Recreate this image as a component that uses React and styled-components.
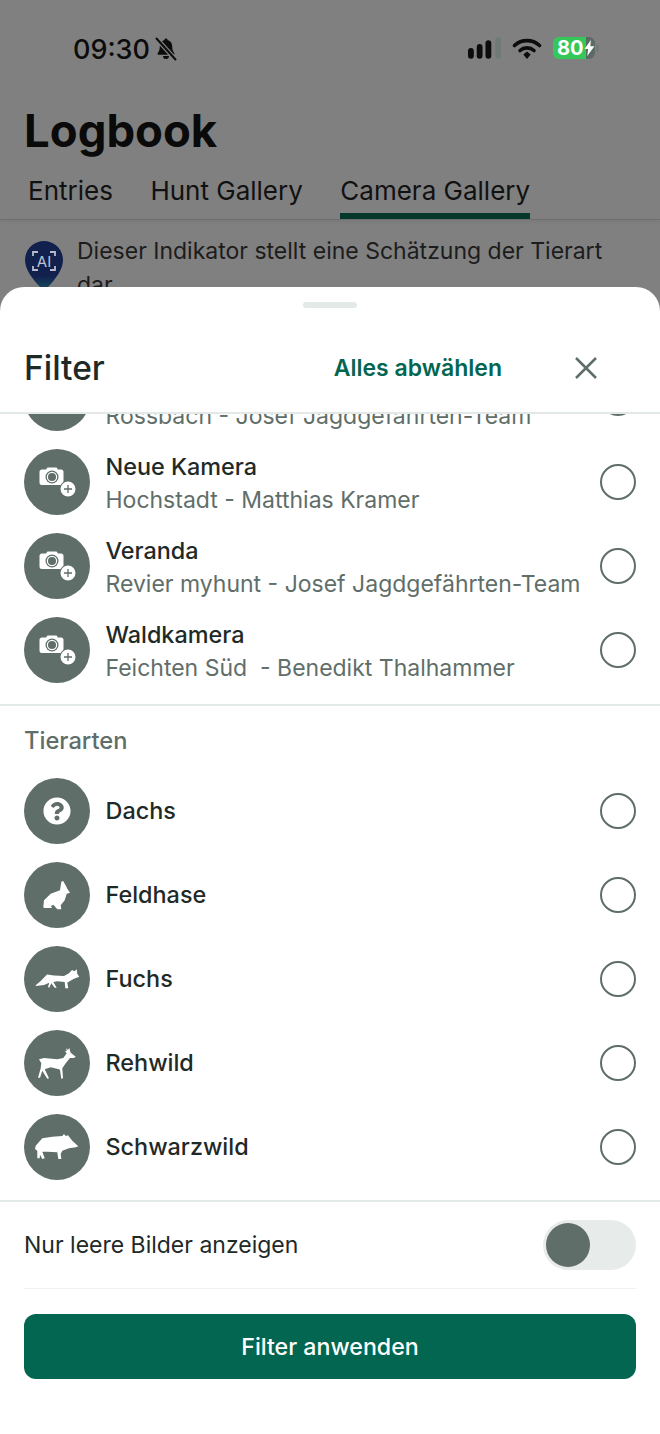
import React from 'react';
import styled, { createGlobalStyle } from 'styled-components';
import { FaQuestionCircle } from 'react-icons/fa';

const GlobalStyle = createGlobalStyle`
  html, body {
    margin: 0;
    padding: 0;
    background: #808080;
  }
  * {
    box-sizing: border-box;
  }
`;

const Page = styled.div`
  width: 660px;
  height: 1434px;
  overflow: hidden;
  display: flex;
  flex-direction: column;
  font-family: Inter, Roboto, "Liberation Sans", sans-serif;
  background: #808080;
`;

const Backdrop = styled.div`
  height: 287px;
  overflow: hidden;
  flex-shrink: 0;
`;

const StatusBar = styled.div`
  height: 98px;
  padding: 32px 61px 0 73px;
  display: flex;
  justify-content: space-between;
  align-items: flex-start;
  color: #0c0c0c;
`;

const StatusLeft = styled.div`
  display: flex;
  align-items: center;
  gap: 5px;
  height: 34px;
  font-size: 27px;
  font-weight: 500;
`;

const StatusRight = styled.div`
  display: flex;
  align-items: center;
  gap: 11px;
  height: 32px;
`;

const Battery = styled.div`
  width: 42px;
  height: 22px;
  border-radius: 6px;
  overflow: hidden;
  display: flex;
  align-items: center;
  padding-left: 4px;
  font-size: 20px;
  font-weight: 700;
  color: #fff;
  background: linear-gradient(to right, #34c759 0, #34c759 33px, #5c6a66 33px);
`;

const BatteryWrap = styled.div`
  display: flex;
  align-items: center;
  gap: 1px;
`;

const BatteryNub = styled.div`
  width: 3px;
  height: 8px;
  border-radius: 0 3px 3px 0;
  background: #6f7a76;
`;

const Title = styled.h1`
  margin: 0;
  padding-left: 24px;
  height: 61px;
  line-height: 66px;
  font-size: 45.5px;
  font-weight: 700;
  color: #0a0a0a;
`;

const Tabs = styled.div`
  height: 61px;
  padding-left: 28px;
  display: flex;
  gap: 37.5px;
  border-bottom: 1px solid #6f6f6f;
  box-shadow: 0 2px 4px rgba(0, 0, 0, 0.06);
`;

const Tab = styled.div`
  height: 60px;
  line-height: 64px;
  font-size: 26px;
  color: #111;
  border-bottom: ${(p) => (p.$active ? '6px solid #03382a' : 'none')};
`;

const Notice = styled.div`
  padding: 14px 24px 0 25px;
  display: flex;
  gap: 14px;
  font-size: 23px;
  line-height: 34px;
  color: #1c1c1c;
`;

const PinIcon = styled.svg`
  flex-shrink: 0;
  margin-top: 7px;
`;

const Sheet = styled.div`
  flex: 1;
  background: #fff;
  border-radius: 24px 24px 0 0;
  display: flex;
  flex-direction: column;
`;

const Handle = styled.div`
  width: 54px;
  height: 6px;
  margin: 15px auto 0;
  border-radius: 3px;
  background: #e3e9e7;
`;

const SheetHeader = styled.div`
  height: 106px;
  padding: 16px 24px 0;
  display: flex;
  align-items: center;
  border-bottom: 2px solid #e3e9e7;
`;

const SheetTitle = styled.div`
  flex: 1;
  font-size: 33.5px;
  font-weight: 500;
  color: #1f2a27;
`;

const ClearButton = styled.div`
  font-size: 23px;
  font-weight: 600;
  color: #036650;
`;

const CloseIcon = styled.svg`
  width: 24px;
  height: 24px;
  margin: 0 38px 0 72px;
`;

const ListClip = styled.div`
  height: 292px;
  overflow: hidden;
  border-bottom: 2px solid #e3e9e7;
  flex-shrink: 0;
`;

const ScrolledList = styled.div`
  margin-top: -58px;
`;

const Row = styled.div`
  height: 84px;
  padding: 0 24px;
  display: flex;
  align-items: center;
`;

const Avatar = styled.div`
  width: 66px;
  height: 66px;
  border-radius: 50%;
  background: #5f6e69;
  color: #fff;
  display: flex;
  align-items: center;
  justify-content: center;
  flex-shrink: 0;
`;

const RowText = styled.div`
  flex: 1;
  min-width: 0;
  align-self: flex-start;
  margin-left: 15.5px;
  padding-top: ${(p) => (p.$single ? '25px' : '10px')};
`;

const RowTitle = styled.div`
  font-size: 23.4px;
  font-weight: 500;
  line-height: 33px;
  color: #1f2a27;
`;

const RowSub = styled.div`
  margin-top: 1px;
  font-size: 23px;
  line-height: 33px;
  color: #5f6e69;
  white-space: pre;
`;

const Radio = styled.div`
  width: 36px;
  height: 36px;
  border-radius: 50%;
  border: 2.5px solid #5f6e69;
  flex-shrink: 0;
`;

const SectionTitle = styled.div`
  height: 63px;
  padding: 16px 24px 0;
  line-height: 38px;
  font-size: 23.7px;
  font-weight: 500;
  color: #5f6e69;
`;

const AnimalList = styled.div`
  padding-bottom: 11px;
  border-bottom: 2px solid #e3e9e7;
`;

const ToggleRow = styled.div`
  height: 87px;
  margin: 0 24px;
  display: flex;
  align-items: center;
  justify-content: space-between;
  font-size: 23px;
  color: #1f2a27;
  border-bottom: 1px solid #eef1f0;
`;

const Toggle = styled.div`
  width: 93px;
  height: 50px;
  padding: 3px;
  border-radius: 25px;
  background: #e7ecea;
`;

const Knob = styled.div`
  width: 44px;
  height: 44px;
  border-radius: 50%;
  background: #5f6e69;
`;

const ApplyButton = styled.div`
  height: 65px;
  margin: 25px 24px 0;
  border-radius: 12px;
  background: #036650;
  color: #fff;
  display: flex;
  align-items: center;
  justify-content: center;
  font-size: 23.2px;
  font-weight: 500;
`;

const CameraIcon = () => (
  <svg width="66" height="66" viewBox="0 0 66 66">
    <path
      d="M18 20.5h4l1.5-2h9l1.5 2h3a2.500 2.500 0 0 1 2.500 2.500v10.500a2.500 2.500 0 0 1-2.500 2.500H18a2.500 2.500 0 0 1-2.500-2.500V23a2.500 2.500 0 0 1 2.500-2.500z"
      fill="#fff"
    />
    <circle cx="28" cy="28" r="6.5" fill="#5f6e69" />
    <circle cx="28" cy="28" r="5.2" fill="#fff" />
    <circle cx="28" cy="28" r="4" fill="#5f6e69" />
    <circle cx="44" cy="40" r="8.5" fill="#5f6e69" />
    <circle cx="44" cy="40" r="7.5" fill="#fff" />
    <path d="M44 36v8M40 40h8" stroke="#5f6e69" strokeWidth="1.3" />
  </svg>
);

const Silhouette = ({ d }) => (
  <svg width="66" height="66" viewBox="0 0 66 66">
    <path d={d} fill="#fff" />
  </svg>
);

const HARE =
  'M19.300 45L20 38.300 26.700 31.700 36 28.300 37.300 20 39 18.700 40.700 21.700 42 24 43.300 26.700 46 30.700 42.700 31.700 40.700 38.300 36.700 43.300 37.300 47.300 33.300 47.300 29.300 42.700 26.700 44.300 28.300 46 20 46Z';
const FOX =
  'M11.700 39.300L16.700 35 23 28.500 30 29.500 40 30 45 27.300 48 24 50.500 25.300 52.700 23.300 53.300 28 55.300 30.700 50 32.700 46 35 43.300 36.700 44.300 42.300 41.300 42.300 40.700 36 33.300 35.300 29.300 36 32.700 41.700 30.700 41.700 27.300 37.300 25.300 41.700 24 41 25.300 36.700 20 39 11.700 40Z';
const DEER =
  'M15 29.300L20 28 33.300 29.300 39.300 28 42.700 23.300 40.700 20.700 42.700 21.300 42.300 18.300 44 20 45.300 17.700 46 20.700 46.700 22.700 51.700 26.700 50 28 46 28 41.700 33.300 38.300 38.300 39 48.300 37.300 48.700 36 40 35 39.300 26.700 37.300 20.700 39.300 25 48.300 23.300 48.700 18.300 40.700 16 47.700 14 47.700 16.700 38.300 17.300 33.300Z';
const BOAR =
  'M11.700 31.700L18.300 24.300 28.300 22.700 38.300 22 40 20 41.700 22 44 21.300 48.300 26.700 54.300 32.300 51.700 33.300 45 34.300 38.300 36.700 36.700 40 37.300 45 34.300 45 33.300 38.300 23.300 37.700 18.300 37.700 20.700 44.300 18.300 45 16 40.700 15.700 44.300 13.300 44.300 13.300 36.700 11 35Z';

const BellOffIcon = () => (
  <svg width="22" height="24" viewBox="0 0 22 24">
    <path
      d="M11 1.500c.9 0 1.500.6 1.600 1.400 3 .8 4.600 3.200 4.600 6.600 0 3 .8 5 2 6.500.6.8.2 1.700-.8 1.700H3.600c-1 0-1.400-.9-.8-1.700 1.200-1.500 2-3.500 2-6.500 0-3.400 1.600-5.800 4.600-6.600.1-.8.7-1.400 1.600-1.400zM8 19h6a3 3 0 0 1-6 0z"
      fill="#0c0c0c"
    />
    <path d="M1.500 1.500l19 21" stroke="#808080" strokeWidth="4.500" />
    <path d="M1.500 1.500l19 21" stroke="#0c0c0c" strokeWidth="2" strokeLinecap="round" />
  </svg>
);

const SignalIcon = () => (
  <svg width="33" height="22" viewBox="0 0 34 22">
    <rect x="0" y="11" width="6" height="11" rx="3" fill="#0c0c0c" />
    <rect x="9" y="7" width="6" height="15" rx="3" fill="#0c0c0c" />
    <rect x="18" y="3" width="6" height="19" rx="3" fill="#0c0c0c" />
    <rect x="28" y="0" width="6" height="22" rx="3" fill="#6f7a76" />
  </svg>
);

const WifiIcon = () => (
  <svg width="30" height="23" viewBox="0 0 29 23" fill="none">
    <path d="M2 8.500c7-6.500 18-6.500 25 0" stroke="#0c0c0c" strokeWidth="3.600" strokeLinecap="round" />
    <path d="M7.500 13.500c4-3.500 10-3.500 14 0" stroke="#0c0c0c" strokeWidth="3.600" strokeLinecap="round" />
    <path d="M10.800 17.500l3.700-3 3.700 3-3.700 4.500z" fill="#0c0c0c" />
  </svg>
);

const BoltIcon = () => (
  <svg width="11" height="16" viewBox="0 0 11 18">
    <path d="M7 0L0 10h4l-1 8 8-11H6.500z" fill="#fff" />
  </svg>
);

const AiPin = () => (
  <PinIcon width="38" height="50" viewBox="0 0 38 50">
    <defs>
      <linearGradient id="pinFill" x1="0" y1="0" x2="0" y2="1">
        <stop offset="0.7" stopColor="#12204e" />
        <stop offset="0.95" stopColor="#174a5c" />
      </linearGradient>
    </defs>
    <path d="M19 0c10.500 0 19 8.500 19 19 0 11-10 22-19 31C10 41 0 30 0 19 0 8.500 8.500 0 19 0z" fill="url(#pinFill)" />
    <path d="M8 15v-4h5M30 15v-4h-5M8 25v4h5M30 25v4h-5" stroke="#b7bdcb" strokeWidth="1.800" fill="none" />
    <text x="19" y="25.500" textAnchor="middle" fontSize="15" fill="#bcc2d0" fontFamily="Inter, sans-serif">AI</text>
  </PinIcon>
);

const cameras = [
  { name: 'Rossbach', sub: 'Rossbach - Josef Jagdgefährten-Team' },
  { name: 'Neue Kamera', sub: 'Hochstadt - Matthias Kramer' },
  { name: 'Veranda', sub: 'Revier myhunt - Josef Jagdgefährten-Team' },
  { name: 'Waldkamera', sub: 'Feichten Süd  - Benedikt Thalhammer' },
];

const animals = [
  { name: 'Dachs', icon: <FaQuestionCircle size={28} /> },
  { name: 'Feldhase', icon: <Silhouette d={HARE} /> },
  { name: 'Fuchs', icon: <Silhouette d={FOX} /> },
  { name: 'Rehwild', icon: <Silhouette d={DEER} /> },
  { name: 'Schwarzwild', icon: <Silhouette d={BOAR} /> },
];

export default function App() {
  return (
    <Page>
      <GlobalStyle />
      <Backdrop>
        <StatusBar>
          <StatusLeft>
            09:30
            <BellOffIcon />
          </StatusLeft>
          <StatusRight>
            <SignalIcon />
            <WifiIcon />
            <BatteryWrap>
              <Battery>
                80
                <BoltIcon />
              </Battery>
              <BatteryNub />
            </BatteryWrap>
          </StatusRight>
        </StatusBar>
        <Title>Logbook</Title>
        <Tabs>
          <Tab>Entries</Tab>
          <Tab>Hunt Gallery</Tab>
          <Tab $active>Camera Gallery</Tab>
        </Tabs>
        <Notice>
          <AiPin />
          <div>Dieser Indikator stellt eine Schätzung der Tierart dar</div>
        </Notice>
      </Backdrop>
      <Sheet>
        <Handle />
        <SheetHeader>
          <SheetTitle>Filter</SheetTitle>
          <ClearButton>Alles abwählen</ClearButton>
          <CloseIcon viewBox="0 0 24 24" fill="none">
            <path d="M2 2l20 20M22 2L2 22" stroke="#5f6e69" strokeWidth="2.500" />
          </CloseIcon>
        </SheetHeader>
        <ListClip>
          <ScrolledList>
            {cameras.map((c) => (
              <Row key={c.name}>
                <Avatar>
                  <CameraIcon />
                </Avatar>
                <RowText>
                  <RowTitle>{c.name}</RowTitle>
                  <RowSub>{c.sub}</RowSub>
                </RowText>
                <Radio />
              </Row>
            ))}
          </ScrolledList>
        </ListClip>
        <SectionTitle>Tierarten</SectionTitle>
        <AnimalList>
          {animals.map((a) => (
            <Row key={a.name}>
              <Avatar>{a.icon}</Avatar>
              <RowText $single>
                <RowTitle>{a.name}</RowTitle>
              </RowText>
              <Radio />
            </Row>
          ))}
        </AnimalList>
        <ToggleRow>
          Nur leere Bilder anzeigen
          <Toggle>
            <Knob />
          </Toggle>
        </ToggleRow>
        <ApplyButton>Filter anwenden</ApplyButton>
      </Sheet>
    </Page>
  );
}
